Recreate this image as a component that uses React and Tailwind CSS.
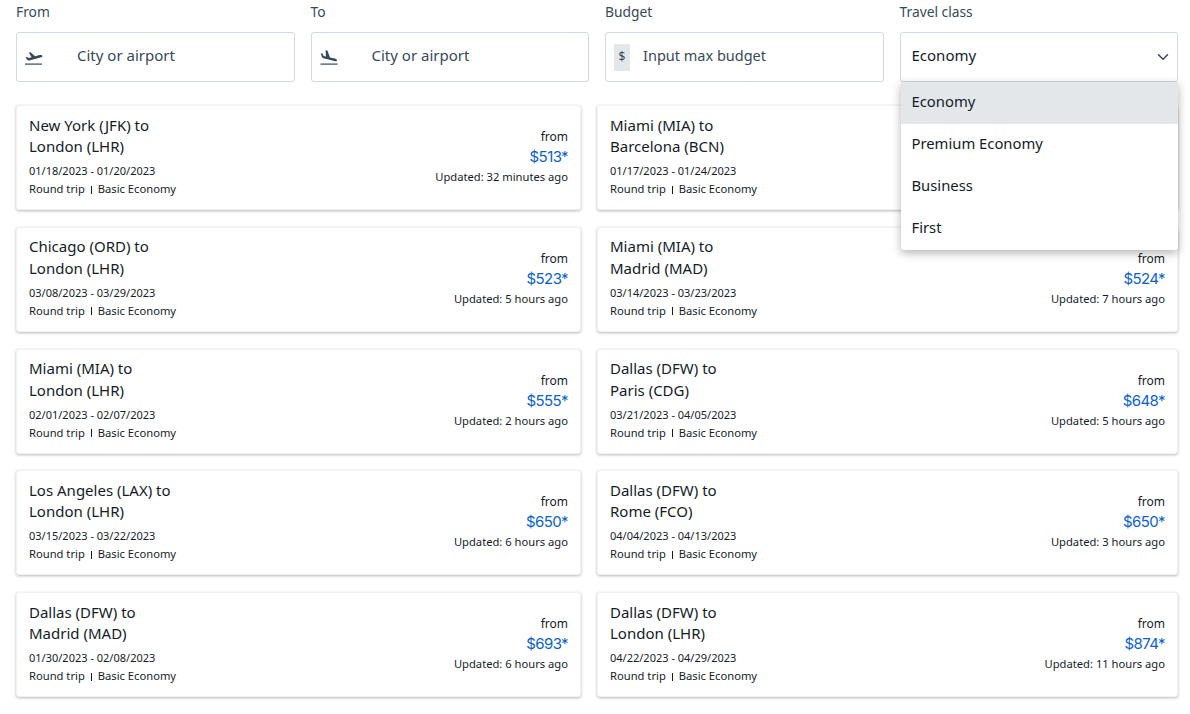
import React from "react";
import {ChevronDown} from "lucide-react";

const deals = [
    {from: "New York (JFK) to", to: "London (LHR)", dates: "01/18/2023 - 01/20/2023", price: "$513*", updated: "Updated: 32 minutes ago"},
    {from: "Miami (MIA) to", to: "Barcelona (BCN)", dates: "01/17/2023 - 01/24/2023", price: "$498*", updated: "Updated: 4 hours ago"},
    {from: "Chicago (ORD) to", to: "London (LHR)", dates: "03/08/2023 - 03/29/2023", price: "$523*", updated: "Updated: 5 hours ago"},
    {from: "Miami (MIA) to", to: "Madrid (MAD)", dates: "03/14/2023 - 03/23/2023", price: "$524*", updated: "Updated: 7 hours ago"},
    {from: "Miami (MIA) to", to: "London (LHR)", dates: "02/01/2023 - 02/07/2023", price: "$555*", updated: "Updated: 2 hours ago"},
    {from: "Dallas (DFW) to", to: "Paris (CDG)", dates: "03/21/2023 - 04/05/2023", price: "$648*", updated: "Updated: 5 hours ago"},
    {from: "Los Angeles (LAX) to", to: "London (LHR)", dates: "03/15/2023 - 03/22/2023", price: "$650*", updated: "Updated: 6 hours ago"},
    {from: "Dallas (DFW) to", to: "Rome (FCO)", dates: "04/04/2023 - 04/13/2023", price: "$650*", updated: "Updated: 3 hours ago"},
    {from: "Dallas (DFW) to", to: "Madrid (MAD)", dates: "01/30/2023 - 02/08/2023", price: "$693*", updated: "Updated: 6 hours ago"},
    {from: "Dallas (DFW) to", to: "London (LHR)", dates: "04/22/2023 - 04/29/2023", price: "$874*", updated: "Updated: 11 hours ago"},
];

const options = ["Economy", "Premium Economy", "Business", "First"];

const Takeoff = () => (
    <svg width="18" height="18" viewBox="0 0 18 18" fill="#36495a">
        <rect x="0" y="15.5" width="17" height="1.2"/>
        <path d="M0.5 9.5 L2 9 L3.6 10 L6.6 9.2 L3.8 4.6 L5.6 4.2 L10 8.2 L14.6 7 C16 6.7 17.4 7.2 17.5 7.9 C17.6 8.6 16.6 9.2 15.4 9.5 L4.4 12.4 C3.6 12.6 3 12.4 2.5 11.9 Z"/>
    </svg>
);

const Landing = () => (
    <svg width="18" height="18" viewBox="0 0 18 18" fill="#36495a">
        <rect x="0.5" y="15.5" width="17" height="1.2"/>
        <path d="M0.8 5.4 L2.2 5.2 L3.6 8 L6 8.6 L5.6 2.2 L7.4 2.4 L10 9.4 L14.6 10.6 C16 11 17.2 11.8 17 12.5 C16.8 13.2 15.6 13.4 14.4 13 L3.4 10.2 C2.6 10 2 9.5 1.8 8.8 Z"/>
    </svg>
);

const Field = ({label, children, className = ""}) => (
    <div className="flex flex-col">
        <label className="h-[32px] text-[13.8px] leading-[24px] text-[#36495a]">{label}</label>
        <div className={"h-[50px] flex items-center bg-white border border-[#d0dae0] rounded-[3px] " + className}>
            {children}
        </div>
    </div>
);

const DealCard = ({deal}) => (
    <div className="h-[105px] flex justify-between bg-white rounded-[3px] border border-[#f0f2f3] shadow-[0_1px_3px_rgba(0,0,0,0.28)] pl-3 pr-3">
        <div className="pt-[8.5px]">
            <div className="text-[15px] leading-[21.5px] text-[#131c28]">{deal.from}</div>
            <div className="text-[15px] leading-[21.5px] text-[#131c28]">{deal.to}</div>
            <div className="mt-[4.5px] text-[11px] leading-[17px] text-[#131c28]">{deal.dates}</div>
            <div className="flex items-center text-[11.2px] leading-[19px] text-[#131c28]">
                Round trip<span className="w-px h-[8px] mt-[2px] mx-[6px] bg-[#131c28]"></span>Basic Economy
            </div>
        </div>
        <div className="pt-[22px] text-right">
            <div className="text-[12px] leading-[18px] text-[#131c28]">from</div>
            <div className="font-['Inter',sans-serif] text-[15px] tracking-[-0.6px] leading-[22px] text-[#0b5fd0]">{deal.price}</div>
            <div className="text-[11.2px] leading-[17px] text-[#131c28]">{deal.updated}</div>
        </div>
    </div>
);

const App = () => {
    return (
        <div className={"relative w-[1190px] h-[714px] overflow-hidden bg-white pl-4 pr-3 font-['Noto_Sans','Open_Sans',sans-serif]"}>
            <div className="grid grid-cols-4 gap-x-4">
                <Field label="From" className="pl-2">
                    <Takeoff/>
                    <span className="ml-[34px] -mt-[4px] text-[15px] text-[#36495a]">City or airport</span>
                </Field>
                <Field label="To" className="pl-2">
                    <Landing/>
                    <span className="ml-[34px] -mt-[4px] text-[15px] text-[#36495a]">City or airport</span>
                </Field>
                <Field label="Budget" className="pl-2">
                    <span className="w-[16px] h-[27px] flex items-center justify-center bg-[#e3e7ea] text-[12px] text-[#36495a]">$</span>
                    <span className="ml-[13px] -mt-[3px] text-[14.5px] text-[#36495a]">Input max budget</span>
                </Field>
                <div className="relative z-10">
                    <Field label="Travel class" className="justify-between pl-[11px] pr-[5px] border-[#aebcc6]">
                        <span className="-mt-[4px] text-[15px] text-[#131c28]">Economy</span>
                        <ChevronDown size={18} color="#36495a" strokeWidth={2}/>
                    </Field>
                    <div className="absolute left-[1px] right-0 top-[82px] bg-white rounded-b-[3px] shadow-[0_3px_10px_rgba(0,0,0,0.3)]">
                        {options.map((o, i) => (
                            <div key={o}
                                 className={"h-[42px] flex items-center pl-[11px] pb-[4px] text-[14.8px] text-[#131c28] " + (i === 0 ? "bg-[#e3e7ea]" : "")}>
                                {o}
                            </div>
                        ))}
                    </div>
                </div>
            </div>
            <div className="mt-[23px] grid grid-cols-[565px_581px] gap-x-4 gap-y-[16.75px]">
                {deals.map((d, i) => <DealCard key={i} deal={d}/>)}
            </div>
        </div>
    );
};

export default App;
